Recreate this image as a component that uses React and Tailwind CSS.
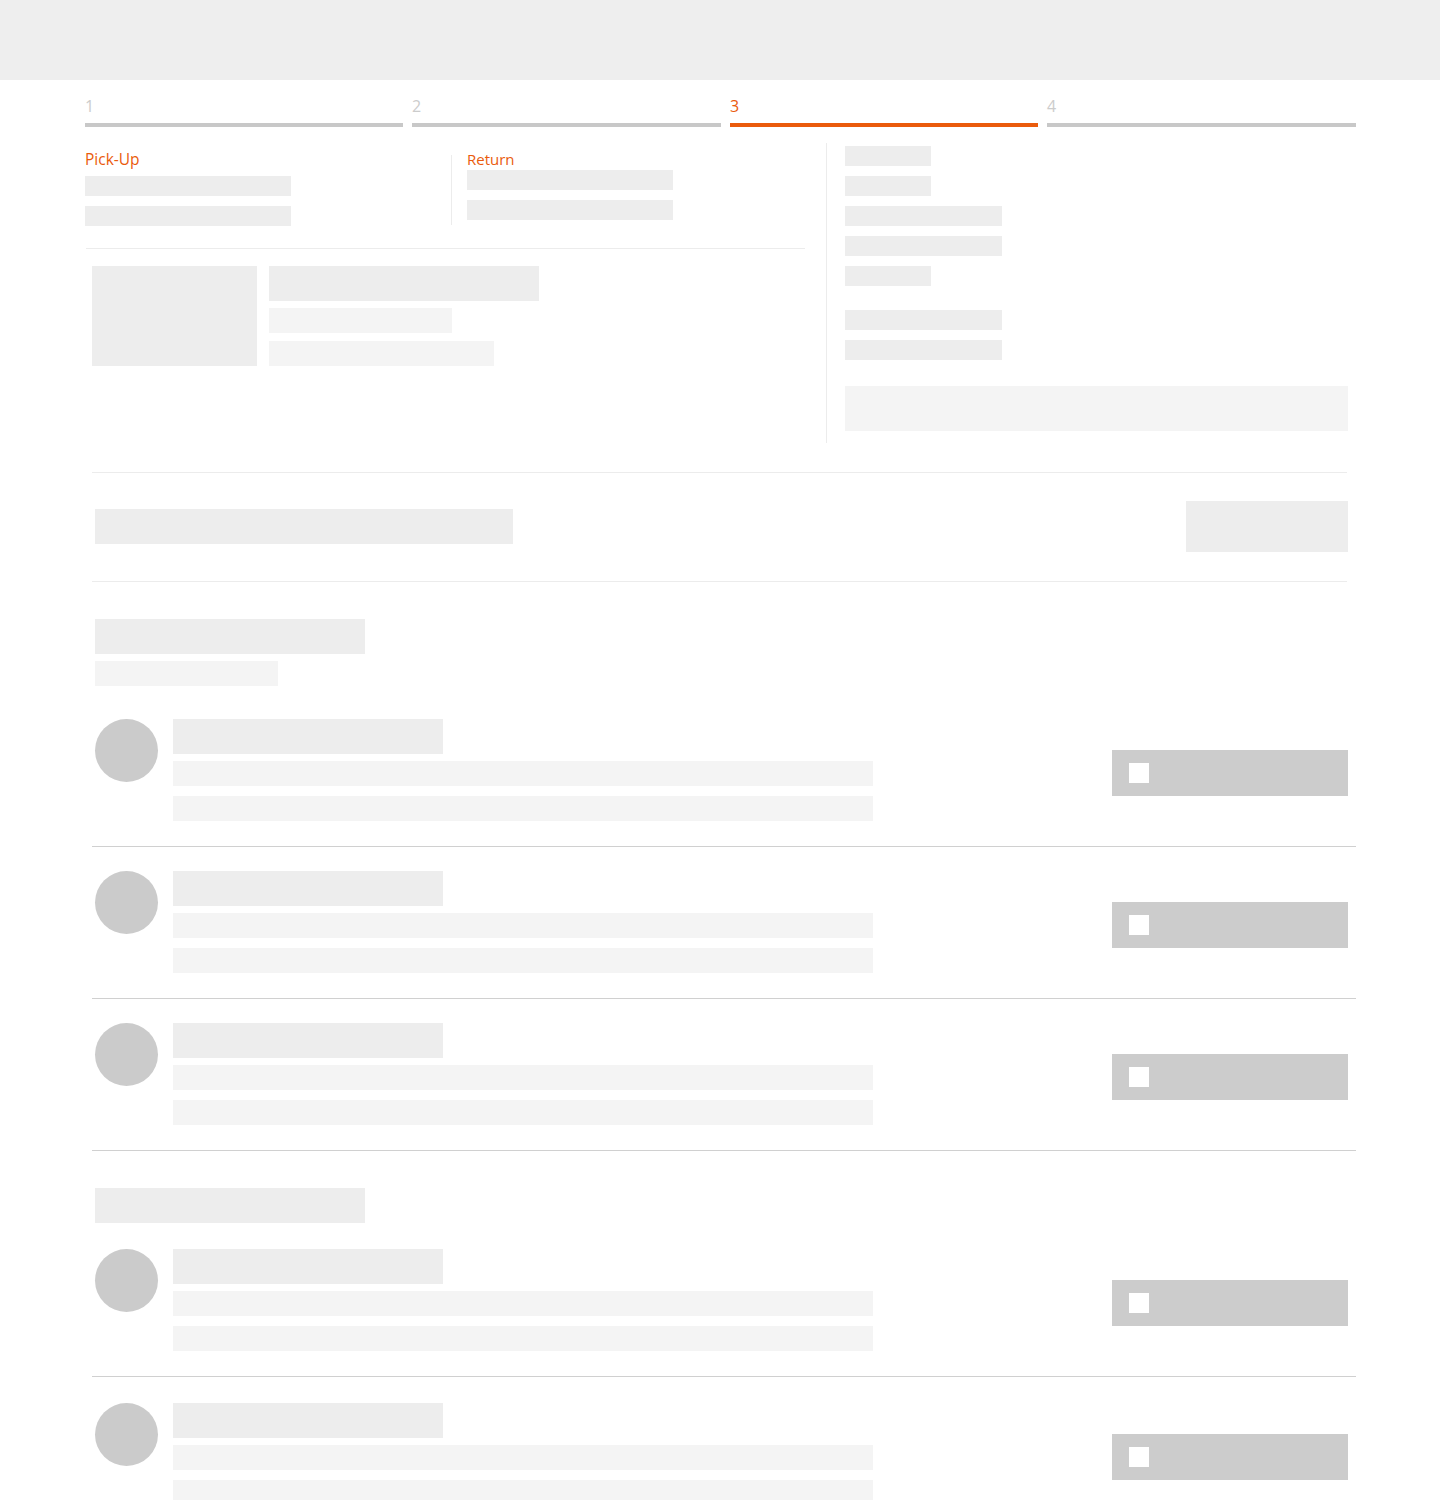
import React from 'react'

const STEPS = [
  { n: '1', w: 'w-[318px]' },
  { n: '2', w: 'w-[309px]' },
  { n: '3', w: 'w-[308px]', active: true },
  { n: '4', w: 'w-[309px]' },
]

function Step({ n, w, active }) {
  return (
    <div className={w}>
      <p className={`text-[16px] leading-5 ${active ? 'text-[#ea5b0c]' : 'text-[#cccccc]'}`}>{n}</p>
      <div className={`mt-[7px] h-1 ${active ? 'bg-[#ea5b0c]' : 'bg-[#c8c8c8]'}`} />
    </div>
  )
}

function Item() {
  return (
    <div className="flex">
      <div className="ml-[10px] w-[63px] h-[63px] rounded-full bg-[#cbcbcb] shrink-0" />
      <div className="ml-[15px] flex flex-col">
        <div className="h-[35px] w-[270px] bg-[#ededed]" />
        <div className="mt-[7px] h-[25px] w-[700px] bg-[#f4f4f4]" />
        <div className="mt-[10px] h-[25px] w-[700px] bg-[#f4f4f4]" />
      </div>
      <div className="ml-auto mr-[8px] mt-[31px] h-[46px] w-[236px] bg-[#cccccc] flex items-center pl-[17px]">
        <div className="w-5 h-5 bg-white" />
      </div>
    </div>
  )
}

function Divider() {
  return <div className="mt-[25px] mb-[24px] ml-[7px] w-[1264px] h-px bg-[#d0d0d0]" />
}

export default function App() {
  return (
    <div className="min-h-[1500px] bg-white font-['Open_Sans',sans-serif]">
      {/* top bar */}
      <div className="h-[80px] bg-[#eeeeee]" />

      <div className="ml-[85px] w-[1271px]">
        {/* Steps */}
        <div className="pt-4 flex gap-[9px]">
          {STEPS.map((s) => (
            <Step key={s.n} {...s} />
          ))}
        </div>

        {/* Summary */}
        <div className="mt-4 flex">
          <div className="w-[720px]">
            <div className="pt-[6px] flex">
              <div className="w-[366px]">
                <p className="text-[15.5px] leading-5 text-[#ea5b0c]">Pick-Up</p>
                <div className="mt-[7px] h-5 w-[206px] bg-[#ededed]" />
                <div className="mt-[10px] h-5 w-[206px] bg-[#ededed]" />
              </div>
              <div className="mt-[6px] w-px h-[70px] bg-[#ececec]" />
              <div className="pl-[15px]">
                <p className="text-[15px] leading-5 text-[#ea5b0c]">Return</p>
                <div className="mt-px h-5 w-[206px] bg-[#ededed]" />
                <div className="mt-[10px] h-5 w-[206px] bg-[#ededed]" />
              </div>
            </div>
            <div className="mt-[22px] ml-px w-[719px] h-px bg-[#ececec]" />
            <div className="mt-[17px] pl-[7px] flex">
              <div className="w-[165px] h-[100px] bg-[#ededed]" />
              <div className="ml-3 flex flex-col">
                <div className="h-[35px] w-[270px] bg-[#ededed]" />
                <div className="mt-[7px] h-[25px] w-[183px] bg-[#f4f4f4]" />
                <div className="mt-2 h-[25px] w-[225px] bg-[#f4f4f4]" />
              </div>
            </div>
          </div>
          <div className="ml-[21px] w-px h-[300px] bg-[#ececec]" />
          <div className="ml-[18px] w-[503px] pt-[3px] flex flex-col">
            <div className="flex flex-col gap-[10px]">
              <div className="h-5 w-[86px] bg-[#ededed]" />
              <div className="h-5 w-[86px] bg-[#ededed]" />
              <div className="h-5 w-[157px] bg-[#ededed]" />
              <div className="h-5 w-[157px] bg-[#ededed]" />
              <div className="h-5 w-[86px] bg-[#ededed]" />
            </div>
            <div className="mt-6 flex flex-col gap-[10px]">
              <div className="h-5 w-[157px] bg-[#ededed]" />
              <div className="h-5 w-[157px] bg-[#ededed]" />
            </div>
            <div className="mt-[26px] h-[45px] w-[503px] bg-[#f4f4f4]" />
          </div>
        </div>

        {/* Total row */}
        <div className="mt-[29px] ml-[7px] w-[1255px] h-px bg-[#ececec]" />
        <div className="ml-[10px] w-[1253px] h-[108px] flex items-start justify-between">
          <div className="mt-[36px] h-[35px] w-[418px] bg-[#ededed]" />
          <div className="mt-[28px] h-[51px] w-[162px] bg-[#ededed]" />
        </div>
        <div className="ml-[7px] w-[1255px] h-px bg-[#ececec]" />

        {/* Section 1 */}
        <div className="mt-[37px] ml-[10px]">
          <div className="h-[35px] w-[270px] bg-[#ededed]" />
          <div className="mt-[7px] h-[25px] w-[183px] bg-[#f4f4f4]" />
        </div>
        <div className="mt-[33px]">
          <Item />
          <Divider />
          <Item />
          <Divider />
          <Item />
          <div className="mt-[25px] ml-[7px] w-[1264px] h-px bg-[#d0d0d0]" />
        </div>

        {/* Section 2 */}
        <div className="mt-[37px] ml-[10px]">
          <div className="h-[35px] w-[270px] bg-[#ededed]" />
        </div>
        <div className="mt-[26px]">
          <Item />
          <div className="mt-[25px] mb-[26px] ml-[7px] w-[1264px] h-px bg-[#d0d0d0]" />
          <Item />
        </div>
      </div>
    </div>
  )
}
